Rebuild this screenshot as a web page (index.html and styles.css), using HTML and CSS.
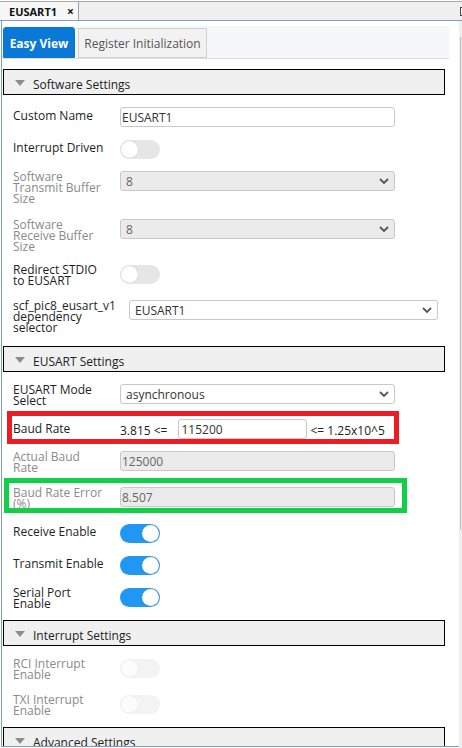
FILE: index.html
```html
<!DOCTYPE html>
<html>
<head>
<meta charset="utf-8">
<title>EUSART1</title>
<link rel="stylesheet" href="styles.css">
</head>
<body>
<div class="window">
  <div class="tabstrip">
    <div class="doctab"><span class="doctab-title">EUSART1</span><span class="doctab-close">×</span></div>
    <span class="strip-icon"></span>
  </div>
  <div class="frame">
    <div class="pane">
      <div class="viewbar">
        <div class="viewtab active">Easy View</div>
        <div class="viewtab">Register Initialization</div>
      </div>

      <div class="section-head first"><span class="caret"></span>Software Settings</div>
      <div class="row gap-12">
        <div class="label single">Custom Name</div>
        <div class="field">EUSART1</div>
      </div>
      <div class="row gap-13">
        <div class="label">Interrupt Driven</div>
        <div class="toggle"><span class="knob"></span></div>
      </div>
      <div class="row multi gap-10">
        <div class="label muted">Software<br>Transmit Buffer<br>Size</div>
        <div class="select disabled"><span>8</span><svg class="chev" width="10" height="6" viewBox="0 0 10 6"><path d="M1 1 L5 5 L9 1" fill="none" stroke="#555" stroke-width="1.8"/></svg></div>
      </div>
      <div class="row multi gap-15">
        <div class="label muted">Software<br>Receive Buffer<br>Size</div>
        <div class="select disabled"><span>8</span><svg class="chev" width="10" height="6" viewBox="0 0 10 6"><path d="M1 1 L5 5 L9 1" fill="none" stroke="#555" stroke-width="1.8"/></svg></div>
      </div>
      <div class="row multi gap-12">
        <div class="label">Redirect STDIO<br>to EUSART</div>
        <div class="toggle"><span class="knob"></span></div>
      </div>
      <div class="row multi gap-14">
        <div class="label wide">scf_pic8_eusart_v1<br>dependency<br>selector</div>
        <div class="select long"><span>EUSART1</span><svg class="chev" width="10" height="6" viewBox="0 0 10 6"><path d="M1 1 L5 5 L9 1" fill="none" stroke="#555" stroke-width="1.8"/></svg></div>
      </div>

      <div class="section-head gap-15"><span class="caret"></span>EUSART Settings</div>
      <div class="row multi gap-10">
        <div class="label">EUSART Mode<br>Select</div>
        <div class="select"><span>asynchronous</span><svg class="chev" width="10" height="6" viewBox="0 0 10 6"><path d="M1 1 L5 5 L9 1" fill="none" stroke="#555" stroke-width="1.8"/></svg></div>
      </div>
      <div class="row boxed-red gap-7">
        <div class="label single">Baud Rate</div>
        <div class="range">
          <span class="bound">3.815 &lt;=</span>
          <div class="field short">115200</div>
          <span class="bound">&lt;= 1.25x10^5</span>
        </div>
      </div>
      <div class="row multi gap-5">
        <div class="label muted">Actual Baud<br>Rate</div>
        <div class="field disabled">125000</div>
      </div>
      <div class="row multi boxed-green gap-7">
        <div class="label muted">Baud Rate Error<br>(%)</div>
        <div class="field disabled">8.507</div>
      </div>
      <div class="row gap-11">
        <div class="label">Receive Enable</div>
        <div class="toggle on"><span class="knob"></span></div>
      </div>
      <div class="row gap-13">
        <div class="label">Transmit Enable</div>
        <div class="toggle on"><span class="knob"></span></div>
      </div>
      <div class="row multi gap-10">
        <div class="label">Serial Port<br>Enable</div>
        <div class="toggle on"><span class="knob"></span></div>
      </div>

      <div class="section-head gap-13"><span class="caret"></span>Interrupt Settings</div>
      <div class="row multi gap-10">
        <div class="label muted">RCI Interrupt<br>Enable</div>
        <div class="toggle disabled"><span class="knob"></span></div>
      </div>
      <div class="row multi gap-14">
        <div class="label muted">TXI Interrupt<br>Enable</div>
        <div class="toggle disabled"><span class="knob"></span></div>
      </div>

      <div class="section-head gap-13"><span class="caret"></span>Advanced Settings</div>
    </div>
    <div class="scrollbar"><div class="thumb"></div></div>
  </div>
</div>
</body>
</html>
```

FILE: styles.css
```css
* { box-sizing: border-box; }
html, body { margin: 0; padding: 0; background: #fff; }
body {
  font-family: "Open Sans", "Noto Sans", sans-serif;
  font-size: 12px;
  color: #1e1e1e;
}
.window {
  width: 462px;
  height: 748px;
  overflow: hidden;
}

/* document tab strip */
.tabstrip {
  margin-top: 1px;
  height: 20px;
  border-top: 1px solid #a9a9a9;
  border-bottom: 1px solid #7d9dc5;
  background: #efefef;
  display: flex;
  align-items: stretch;
}
.doctab {
  width: 79px;
  flex: none;
  display: flex;
  align-items: center;
  padding-left: 9px;
  padding-top: 1px;
  background: #f7f7f7;
  border-right: 1px solid #a0a0a0;
  font-weight: 700;
  font-size: 11px;
  color: #111;
}
.doctab-title { width: 58px; }
.doctab-close { font-size: 12px; line-height: 1; }
.strip-icon {
  margin-left: auto;
  margin-right: -8px;
  margin-top: 5px;
  width: 10px;
  height: 9px;
  flex: none;
  border: 1px solid #444;
  background: #fff;
}

.frame {
  display: flex;
  height: 727px;
  width: 462px;
  overflow: hidden;
}
.pane {
  flex: none;
  margin-left: 1px;
  width: 458px;
  height: 726px;
  border-left: 1px solid #7d9dc5;
  border-bottom: 1px solid #7d9dc5;
  overflow: hidden;
}
.scrollbar {
  width: 17px;
  flex: none;
  background: #f0f0f0;
  padding-top: 16px;
}
.thumb {
  margin-left: 1px;
  height: 493px;
  border-left: 1px solid #c3c3c3;
  background: #e6e6e6;
}

/* view switcher */
.viewbar {
  margin: 5px 10px 0 0;
  height: 33px;
  background: #f6f7f9;
  border-bottom: 1px solid #dedede;
  display: flex;
  align-items: flex-end;
  gap: 3px;
  padding-left: 1px;
}
.viewtab {
  height: 30px;
  width: 129px;
  display: flex;
  align-items: center;
  justify-content: center;
  padding-top: 1px;
  background: #f2f2f2;
  border: 1px solid #d0d0d0;
  color: #555;
  font-size: 12px;
}
.viewtab.active {
  height: 31px;
  width: 72px;
  background: #0a78d6;
  border-color: #0a78d6;
  border-radius: 3px 3px 0 0;
  color: #fff;
  font-weight: 700;
}

/* section headers */
.section-head {
  margin: 0 14px 0 1px;
  height: 26px;
  border: 1px solid #000;
  background: #f0f0f0;
  display: flex;
  align-items: center;
  padding-left: 11px;
  padding-top: 4px;
  font-size: 12px;
  color: #222;
}
.section-head.first { margin-top: 10px; }
.caret {
  width: 0;
  height: 0;
  border-left: 5px solid transparent;
  border-right: 5px solid transparent;
  border-top: 6px solid #8c8c8c;
  margin-right: 8px;
  margin-top: -2px;
}

/* rows */
.row {
  display: flex;
  align-items: flex-start;
  padding-left: 11px;
}
.label {
  width: 107px;
  flex: none;
  line-height: 11px;
  padding-top: 2px;
  margin-bottom: -2px;
  color: #1e1e1e;
}
.label.single { margin-top: 1px; }
.label.wide { width: 116px; }
.label.muted { color: #8a8a8a; }
.row.multi .field,
.row.multi .select { margin-top: 2px; }
.row.multi .toggle { margin-top: 3px; }

.field, .select {
  width: 275px;
  height: 20px;
  border: 1px solid #c8c8c8;
  border-radius: 3px;
  background: #fff;
  color: #333;
  display: flex;
  align-items: center;
  padding: 2px 1px 0;
  line-height: 1;
}
.field.disabled, .select.disabled {
  background: #ebebeb;
  color: #666;
}
.select {
  justify-content: space-between;
  padding: 2px 5px 0;
}
.select .chev { margin-top: -2px; }
.select.long { width: 309px; }
.chev { flex: none; }

.toggle {
  width: 40px;
  height: 19px;
  border-radius: 10px;
  background: #e6e6e6;
  display: flex;
  align-items: center;
  padding: 0 1px;
}
.knob {
  width: 17px;
  height: 17px;
  border-radius: 50%;
  background: #fff;
  box-shadow: 0 0 1px rgba(0,0,0,0.25);
}
.toggle.on {
  background: #2196f3;
  justify-content: flex-end;
}
.toggle.disabled { background: #f3f3f3; }
.toggle.disabled .knob { background: #fcfcfc; box-shadow: 0 0 1px rgba(0,0,0,0.12); }

/* highlighted rows */
.boxed-red {
  margin-left: 5px;
  width: 392px;
  border: 5px solid #ec1c24;
  padding: 3px 2px 0 1px;
}
.boxed-red .label.single { margin-top: 2px; }
.range {
  display: flex;
  align-items: center;
  height: 20px;
  padding-top: 2px;
}
.range .field { margin-top: -2px; }
.bound { color: #222; white-space: nowrap; }
.field.short { width: 129px; margin-left: 11px; margin-right: 3px; padding-left: 2px; }
.boxed-green {
  margin-left: 2px;
  width: 403px;
  border: 5px solid #12cf48;
  padding: 2px 0 1px 4px;
}

/* vertical spacing */
.gap-5 { margin-top: 5px; }
.gap-7 { margin-top: 7px; }
.gap-10 { margin-top: 10px; }
.gap-11 { margin-top: 11px; }
.gap-12 { margin-top: 12px; }
.gap-13 { margin-top: 13px; }
.gap-14 { margin-top: 14px; }
.gap-15 { margin-top: 15px; }
```
